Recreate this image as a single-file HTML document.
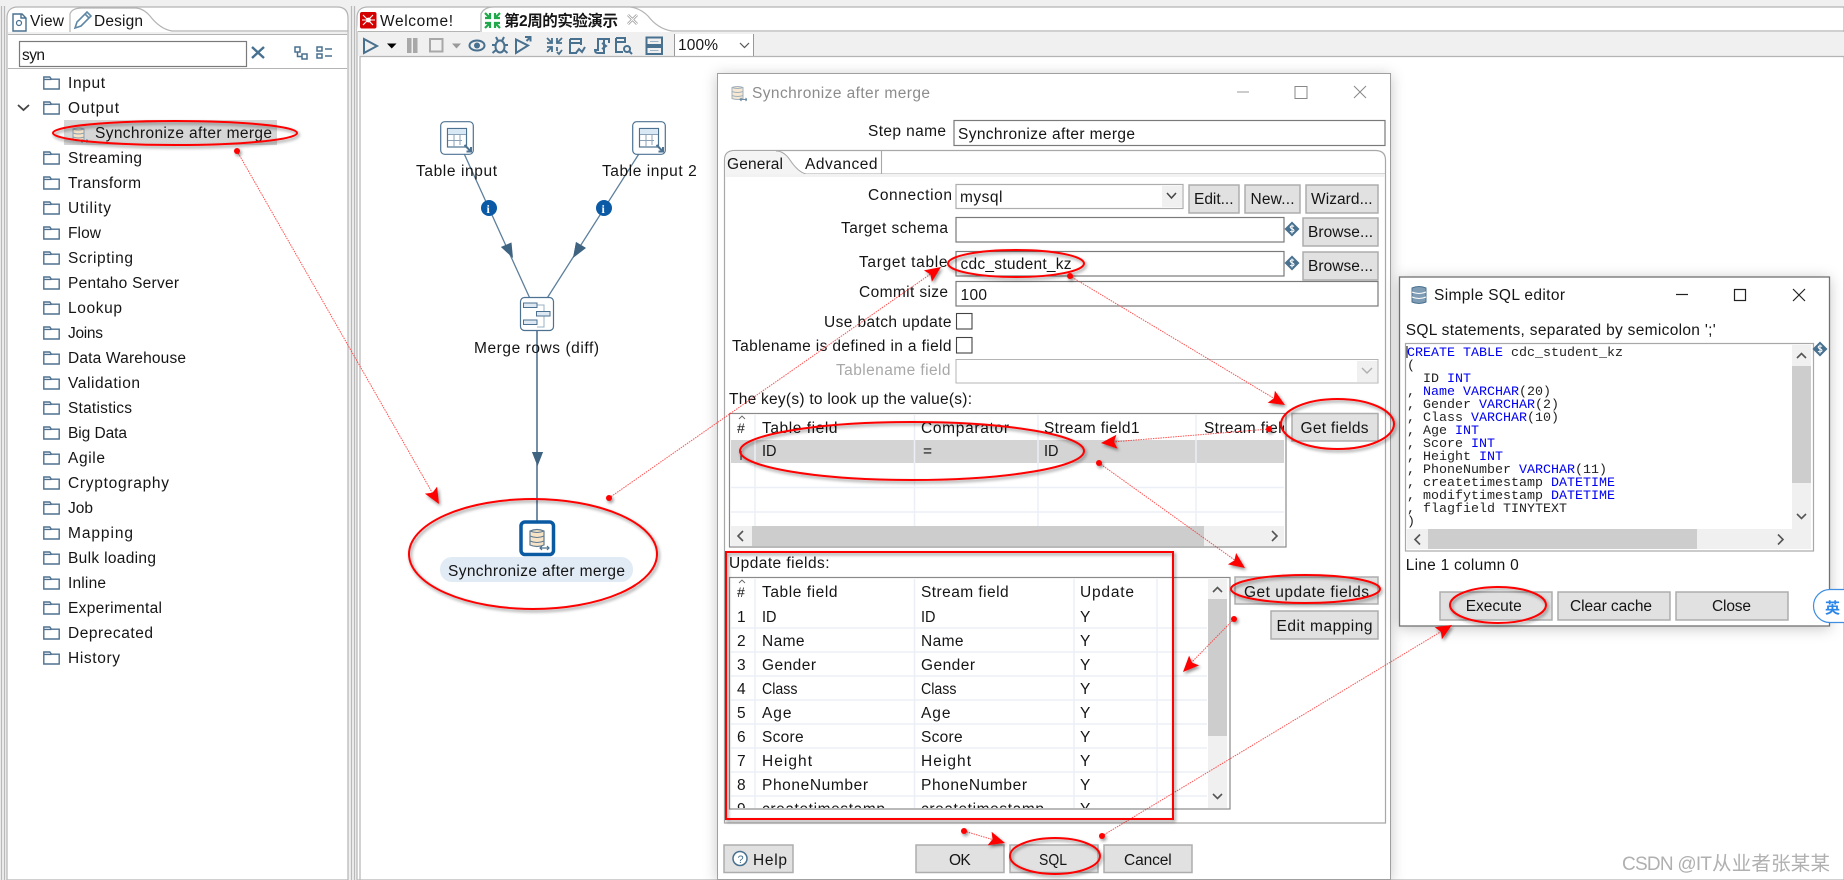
<!DOCTYPE html>
<html lang="en"><head><meta charset="utf-8"><title>Synchronize after merge</title>
<style>
html,body{margin:0;padding:0;background:#f0f0f0;width:1844px;height:880px;overflow:hidden}
svg{display:block}
text{font-family:"Liberation Sans","Noto Sans CJK SC",sans-serif;font-size:15.5px;fill:#151515}
.b{fill:#e1e1e1;stroke:#adadad;stroke-width:1.5}
.i{fill:#fff;stroke:#7a7a7a;stroke-width:1.2}
.ic{fill:none;stroke:#48708f;stroke-width:2}
.gl{stroke:#eceff5;stroke-width:1.5}
.sb{fill:#f0f0f0}.th{fill:#cdcdcd}
.ar{fill:none;stroke:#555;stroke-width:1.6}
.an{stroke:#f33;stroke-width:1;stroke-dasharray:1.5 1;fill:none;opacity:.85}
.e{fill:none;stroke:#f00;stroke-width:2}
.h{fill:#f00}
.m text,text.m{font-family:"Liberation Mono",monospace;font-size:13.33px;fill:#222}
.k{fill:#0000f0}
</style></head><body>
<svg xmlns="http://www.w3.org/2000/svg" width="1844" height="880" viewBox="0 0 1844 880">
<defs>
<filter id="s" x="-20%" y="-20%" width="150%" height="150%"><feDropShadow dx="1.5" dy="2" stdDeviation="1.6" flood-color="#000" flood-opacity=".45"/></filter>
<filter id="d" x="-5%" y="-5%" width="110%" height="110%"><feDropShadow dx="0" dy="2" stdDeviation="7" flood-color="#000" flood-opacity=".22"/></filter>
<clipPath id="c1"><rect x="731" y="414" width="553" height="112"/></clipPath>
<clipPath id="c2"><rect x="731" y="578" width="476" height="230"/></clipPath>
<symbol id="f" width="17" height="14" viewBox="0 0 17 14"><path d="M.8 1h6l1.6 2.200h7.800V13H.8zM.8 3.400h7.600" fill="none" stroke="#4f7190" stroke-width="1.400"/></symbol>
<symbol id="ds" width="16" height="16" viewBox="0 0 16 16"><path d="M8 .5 15.500 8 8 15.500.5 8z" fill="#48708f"/><path d="M10 5.500C9 4.600 6.200 4.600 6.200 6.300 6.200 8 10 7.500 10 9.500 10 11.200 7 11.200 6 10.200M8 3.500v9" stroke="#fff" stroke-width="1" fill="none"/></symbol>
<symbol id="t" width="34" height="34" viewBox="0 0 34 34"><rect x=".7" y=".7" width="32.600" height="32.600" rx="4" fill="#fff" stroke="#4d7291" stroke-width="1.200"/><rect x="7.500" y="7.500" width="19" height="18.500" fill="#fff" stroke="#4d7291" stroke-width="1.200"/><rect x="8" y="8" width="18" height="5" fill="#d9e8f5"/><path d="M8 13.500h18M8 19.500h14M14 13.500V26M20 13.500V24" stroke="#8aa3b8" fill="none"/><path d="M24.500 24l6.500 6.500M31 26v4.500h-4.500" stroke="#4d7291" stroke-width="2" fill="none"/></symbol>
<symbol id="db" width="16" height="16" viewBox="0 0 16 16"><path d="M1 2q5.500-2 11 0v11q-5.500 2-11 0z" fill="#f6e3c6" stroke="#8a9db0"/><path d="M1 2q5.500 2 11 0M1 6q5.500 2 11 0M1 10q5.500 2 11 0" fill="none" stroke="#8a9db0"/><path d="M9 14h7M10.500 12.500L9 14l1.500 1.500M14.500 12.500L16 14l-1.500 1.500" fill="none" stroke="#48708f" stroke-width="1.100"/></symbol>
</defs>

<rect width="1844" height="880" fill="#f0f0f0"/>
<!-- left window edges -->
<path d="M1.500 6V880M4.500 6V880" stroke="#b9b9b9" stroke-width="1.200"/>
<path d="M351.500 6V880M354.500 6V880" stroke="#b9b9b9" stroke-width="1.200"/>

<!-- Left panel -->
<path d="M7 880V18Q7 7 18 7H337Q348 7 348 18V880Z" fill="#fff" stroke="#b4b4b4" stroke-width="1.200"/>
<path d="M8 32H69V12Q69 9 66 9H18Q9 9 9 18V32Z" fill="#fff"/>
<path d="M70 32V14Q72 8 82 8H135Q143 8 150 16Q160 29 172 31H348" fill="#fff" stroke="#b4b4b4" stroke-width="1.200"/>
<rect x="8" y="32" width="339" height="3" fill="#f0f0f0"/>
<path d="M8 34.500H347" stroke="#b4b4b4"/>
<path d="M13 14h9l4 4v13H13zM21 14v4h5" fill="#fff" stroke="#48708f" stroke-width="1.400"/><circle cx="19" cy="23" r="2.500" fill="none" stroke="#48708f" stroke-width="1.200"/>
<path d="M75 28l2-6 10-10 4 4-10 10zM85 14l4 4" fill="none" stroke="#5f87a6" stroke-width="1.600"/>
<text x="30" y="26" textLength="34">View</text><text x="94" y="26" textLength="49">Design</text>
<rect x="19.500" y="41.500" width="227" height="25" class="i"/><text x="22" y="60" textLength="23">syn</text>
<path d="M252 47l12 11M264 47l-12 11" stroke="#48708f" stroke-width="2.400"/>
<path d="M295 47h5v5h-5zM302 54h5v5h-5zM297.500 52v4.500h4.500" fill="none" stroke="#48708f" stroke-width="1.500"/>
<path d="M317 47h5v4h-5zM317 54h5v4h-5zM325 49h7M325 56h7" fill="none" stroke="#48708f" stroke-width="1.500"/>
<path d="M8 68.500H347" stroke="#b4b4b4"/>
<path d="M18 105l5.500 5 5.500-5" fill="none" stroke="#444" stroke-width="1.800"/>
<use href="#f" x="43" y="76"/><text x="68" y="88" textLength="37">Input</text>
<use href="#f" x="43" y="101"/><text x="68" y="113" textLength="51">Output</text>
<rect x="64" y="120" width="213" height="25" fill="#d6d6d6"/>
<use href="#db" x="72" y="127"/>
<text x="95" y="138" textLength="177">Synchronize after merge</text>
<use href="#f" x="43" y="151"/><text x="68" y="163" textLength="74">Streaming</text>
<use href="#f" x="43" y="176"/><text x="68" y="188" textLength="73">Transform</text>
<use href="#f" x="43" y="201"/><text x="68" y="213" textLength="43">Utility</text>
<use href="#f" x="43" y="226"/><text x="68" y="238" textLength="33">Flow</text>
<use href="#f" x="43" y="251"/><text x="68" y="263" textLength="65">Scripting</text>
<use href="#f" x="43" y="276"/><text x="68" y="288" textLength="111">Pentaho Server</text>
<use href="#f" x="43" y="301"/><text x="68" y="313" textLength="54">Lookup</text>
<use href="#f" x="43" y="326"/><text x="68" y="338" textLength="35">Joins</text>
<use href="#f" x="43" y="351"/><text x="68" y="363" textLength="118">Data Warehouse</text>
<use href="#f" x="43" y="376"/><text x="68" y="388" textLength="72">Validation</text>
<use href="#f" x="43" y="401"/><text x="68" y="413" textLength="64">Statistics</text>
<use href="#f" x="43" y="426"/><text x="68" y="438" textLength="59">Big Data</text>
<use href="#f" x="43" y="451"/><text x="68" y="463" textLength="37">Agile</text>
<use href="#f" x="43" y="476"/><text x="68" y="488" textLength="101">Cryptography</text>
<use href="#f" x="43" y="501"/><text x="68" y="513" textLength="25">Job</text>
<use href="#f" x="43" y="526"/><text x="68" y="538" textLength="65">Mapping</text>
<use href="#f" x="43" y="551"/><text x="68" y="563" textLength="88">Bulk loading</text>
<use href="#f" x="43" y="576"/><text x="68" y="588" textLength="38">Inline</text>
<use href="#f" x="43" y="601"/><text x="68" y="613" textLength="94">Experimental</text>
<use href="#f" x="43" y="626"/><text x="68" y="638" textLength="85">Deprecated</text>
<use href="#f" x="43" y="651"/><text x="68" y="663" textLength="52">History</text>

<!-- Editor area -->
<path d="M357 880V18Q357 7 368 7H1844V880Z" fill="#fff" stroke="#b4b4b4" stroke-width="1.200"/>
<path d="M357 31H480V9H368Q358 9 358 18Z" fill="#fff"/>
<path d="M481 32V14Q484 7 494 7H630Q640 8 648 16Q658 29 672 31H1844" fill="#fff" stroke="#b4b4b4" stroke-width="1.200"/>
<rect x="358" y="32" width="1486" height="24" fill="#f0f0f0"/>
<path d="M480 31.500H358" stroke="#b4b4b4"/>
<rect x="360" y="12" width="16.500" height="16.500" rx="2" fill="#d40000"/>
<path d="M363 15l10 10M373 15l-10 10M362 20h13" stroke="#fff" stroke-width="1.100"/><circle cx="368.500" cy="20" r="2.400" fill="#fff"/>
<text x="380" y="26" textLength="73">Welcome!</text>
<path d="M485 13l5 5M490 13v5h-5M500 13l-5 5M495 13v5h5M485 28l5-5M490 28v-5h-5M500 28l-5-5M495 28v-5h5" fill="none" stroke="#1fa94a" stroke-width="2.200"/>
<text x="504" y="26" textLength="114" font-weight="bold" style="font-size:15.500px">第2周的实验演示</text>
<path d="M628 15l9 9M637 15l-9 9" stroke="#9a9a9a" stroke-width="2.600"/><path d="M628 15l9 9M637 15l-9 9" stroke="#fff" stroke-width="1"/>
<!-- toolbar -->
<path d="M364 39l13 7-13 7z" class="ic"/>
<path d="M387 43.500h9.500l-4.750 5z" fill="#000"/>
<path d="M407 38h4.500v15H407zM413 38h4.500v15H413z" fill="#a8a8a8"/>
<rect x="430" y="39" width="12.500" height="12.500" fill="none" stroke="#a8a8a8" stroke-width="2"/>
<path d="M452 43.500h9l-4.500 5z" fill="#999"/>
<ellipse cx="477" cy="45.500" rx="7.500" ry="5" class="ic"/><circle cx="477" cy="45.500" r="3" fill="#48708f"/>
<ellipse cx="500" cy="46.500" rx="4.500" ry="6" class="ic" stroke-width="2"/><path d="M496 37l2 4M504 37l-2 4M492 45h4M504 45h4M492.500 53l3.500-3M507.500 53l-3.500-3" class="ic" stroke-width="1.700"/>
<path d="M516 39.500l12 6-12 7.500zM525 37h5.500v4.500M530.500 37l-4 4" class="ic" stroke-width="1.900"/>
<path d="M547 38l5 5M552 38v5h-5M562 38l-5 5M557 38v5h5M547 52l5-5M552 52v-5h-5M557 47v4M557 52l2 2 3-4" fill="none" stroke="#48708f" stroke-width="1.800"/>
<path d="M570 39h11v6M570 39v14h7M570 43h11M576 53l3-4 3 3 3-5" class="ic" stroke-width="1.500"/>
<path d="M598 53q-3 0-3-3h3v-11h11v4M604 39v14h-6M602 43l4 3-4 3" class="ic" stroke-width="1.500"/>
<path d="M616 38h9v5M616 38v14h7M616 42h9" class="ic" stroke-width="1.500"/><circle cx="627" cy="49" r="3" class="ic" stroke-width="1.400"/><path d="M629 51l3 3" class="ic" stroke-width="1.500"/>
<rect x="646.500" y="37.500" width="15.500" height="7.500" class="ic" stroke-width="1.400"/><rect x="646.500" y="47" width="15.500" height="7" class="ic" stroke-width="1.400"/><path d="M650 41.500h8.500M650 50.500h8.500" stroke="#9db4c6"/>
<rect x="675" y="34" width="78" height="22" fill="#fff"/><path d="M674.500 34V56M753.500 34V56" stroke="#999"/>
<text x="678" y="50" textLength="40">100%</text><path d="M740 43l4.500 4.500 4.500-4.500" fill="none" stroke="#555" stroke-width="1.200"/>
<path d="M360 56.500H1844M360 56V880" stroke="#b4b4b4" stroke-width="1.200"/>

<!-- canvas -->
<path d="M457 138L537 314M649 138L537 314" stroke="#5d7f9c" stroke-width="1.300" fill="none"/>
<path d="M537 330V521" stroke="#46688a" stroke-width="1.500"/>
<use href="#t" x="440" y="121"/><use href="#t" x="632" y="121"/>
<text x="416" y="176" textLength="81">Table input</text><text x="602" y="176" textLength="94.700">Table input 2</text>
<circle cx="489" cy="208" r="8" fill="#0b5aa5"/><text x="486.500" y="213" style="font-size:12px;fill:#fff;font-weight:bold;font-family:'Liberation Serif',serif">i</text>
<circle cx="604" cy="208" r="8" fill="#0b5aa5"/><text x="601.500" y="213" style="font-size:12px;fill:#fff;font-weight:bold;font-family:'Liberation Serif',serif">i</text>
<path d="M513 258l-12-11 10.500-4.500-5 4zM573 258l3-16 10 6-6-2zM537.500 466l-5.500-14 5.500 2 5.500-2z" fill="#3f6482"/>
<path d="M513 258L501 247 511.500 242.500ZM573 258L576 242 586 248ZM537.500 466L532 452H543Z" fill="#3f6482"/>
<rect x="520.500" y="297.500" width="33" height="33" rx="4" fill="#fff" stroke="#4d7291" stroke-width="1.200"/>
<path d="M537 305h7v22h-7" fill="none" stroke="#9ab1c5"/>
<rect x="523.500" y="303" width="13.500" height="4.500" fill="#dfe9f3" stroke="#4d7291"/><rect x="536.500" y="311.500" width="13.500" height="4.500" fill="#dfe9f3" stroke="#4d7291"/><rect x="523.500" y="320" width="13.500" height="4.500" fill="#dfe9f3" stroke="#4d7291"/>
<text x="474" y="353" textLength="125">Merge rows (diff)</text>
<rect x="521" y="522" width="32.500" height="32.500" rx="4" fill="#fff" stroke="#0a5aa3" stroke-width="3.500"/>
<path d="M530 531q7-3 14 0v14q-7 3-14 0z" fill="#f6e3c6" stroke="#5f7a92" stroke-width="1.200"/><path d="M530 536q7 3 14 0M530 541q7 3 14 0M530 531q7 3 14 0" fill="none" stroke="#5f7a92"/>
<path d="M540 548h9M542 546l-2 2 2 2M547 546l2 2-2 2" fill="none" stroke="#48708f" stroke-width="1.200"/>
<rect x="440" y="557" width="193" height="25" rx="12" fill="#e1ebf5"/>
<text x="448" y="576" textLength="177">Synchronize after merge</text>

<!-- Dialog 1 -->
<rect x="717.500" y="73.500" width="673" height="806" fill="#fff" stroke="#a0a0a0" filter="url(#d)"/>
<use href="#db" x="731" y="85.500" opacity=".8"/>
<text x="752" y="98" textLength="178" style="fill:#8c8c8c">Synchronize after merge</text>
<path d="M1237 92h12" stroke="#aaa" stroke-width="1.200"/><rect x="1295" y="86.500" width="12" height="12" fill="none" stroke="#888"/><path d="M1354 86l12 12M1366 86l-12 12" stroke="#888"/>
<text x="868" y="136" textLength="78">Step name</text>
<rect x="954" y="120.500" width="431" height="25" class="i"/><text x="958" y="139" textLength="177">Synchronize after merge</text>
<path d="M724.500 823V160Q724.500 150.500 735 150.500H1375Q1385.500 150.500 1385.500 160V823Z" fill="#fff" stroke="#a8a8a8" stroke-width="1.200"/>
<path d="M725 174V160Q725 151 735 151H775Q784 151 790 160Q798 172 806 174Z" fill="#f4f4f4"/>
<path d="M776 151Q784 151 790 160Q798 172 806 174H1385M881.500 151V174" fill="none" stroke="#a8a8a8" stroke-width="1.100"/>
<rect x="725" y="174" width="660" height="3" fill="#f2f2f2"/>
<text x="727" y="169" textLength="56">General</text><text x="805" y="169" textLength="72.500">Advanced</text>
<text x="868" y="200" textLength="84">Connection</text>
<rect x="956" y="184.500" width="227" height="24" class="i" style="stroke:#adadad"/><rect x="1162" y="186" width="20" height="21" fill="#f0f0f0"/><path d="M1167 193l4.500 5 4.500-5" fill="none" stroke="#444" stroke-width="1.500"/>
<text x="960" y="202" textLength="42.500">mysql</text>
<rect x="1189" y="185" width="50" height="28" class="b"/><text x="1194" y="204" textLength="39.500">Edit...</text>
<rect x="1245" y="185" width="55" height="28" class="b"/><text x="1250.500" y="204" textLength="44">New...</text>
<rect x="1306" y="185" width="72" height="28" class="b"/><text x="1311" y="204" textLength="61.600">Wizard...</text>
<text x="841" y="233" textLength="107">Target schema</text>
<rect x="956" y="217.500" width="328" height="24.500" class="i"/><use href="#ds" x="1284" y="221"/>
<rect x="1303" y="218" width="75" height="28" class="b"/><text x="1308" y="237" textLength="65">Browse...</text>
<text x="859" y="267" textLength="88.500">Target table</text>
<rect x="956" y="251.500" width="328" height="24.500" class="i"/><use href="#ds" x="1284" y="255"/>
<text x="960.500" y="269" textLength="111">cdc_student_kz</text>
<rect x="1303" y="252" width="75" height="28" class="b"/><text x="1308" y="271" textLength="65">Browse...</text>
<text x="859" y="297" textLength="89">Commit size</text>
<rect x="956" y="281.500" width="422" height="24.500" class="i"/><text x="960.500" y="300" textLength="26.500">100</text>
<text x="824" y="327" textLength="127.500">Use batch update</text><rect x="956.500" y="313.500" width="15.500" height="15.500" fill="#fff" stroke="#444" stroke-width="1.100"/>
<text x="732" y="351" textLength="219.500">Tablename is defined in a field</text><rect x="956.500" y="337.500" width="15.500" height="15.500" fill="#fff" stroke="#444" stroke-width="1.100"/>
<text x="836" y="375" textLength="114.500" style="fill:#a8a8a8">Tablename field</text>
<rect x="956" y="359.500" width="422" height="23.500" fill="#fff" stroke="#b4b4b4"/><rect x="1357" y="361" width="20.500" height="21" fill="#f0f0f0"/><path d="M1362 368l5 5 5-5" fill="none" stroke="#b0b0b0" stroke-width="1.500"/>
<text x="729" y="404" textLength="243">The key(s) to look up the value(s):</text>

<!-- key table -->
<rect x="729.500" y="413.500" width="556.500" height="133.500" fill="#fff" stroke="#8a8a8a" stroke-width="1.200"/>
<rect x="731" y="440" width="553" height="23" fill="#d4d4d4"/>
<path d="M731 487.500H1284M731 512H1284" class="gl"/>
<path d="M755 415V526M914.500 415V526M1038 415V526M1196 415V526" class="gl"/>
<path d="M739 419l3-3 3 3" fill="none" stroke="#666" stroke-width=".9"/>
<g clip-path="url(#c1)"><text x="737" y="433" style="font-size:14px">#</text><text x="762" y="433" textLength="75.500">Table field</text><text x="921" y="433" textLength="88">Comparator</text><text x="1044" y="433" textLength="95.500">Stream field1</text><text x="1204" y="433" textLength="95.500">Stream field2</text>
<path d="M741 451v9" stroke="#333" stroke-width="1.200"/><text x="762" y="456" textLength="14.500" lengthAdjust="spacingAndGlyphs">ID</text><text x="923" y="456">=</text><text x="1044" y="456" textLength="14.500" lengthAdjust="spacingAndGlyphs">ID</text></g>
<rect x="731" y="526" width="553" height="20" class="sb"/><rect x="752" y="526" width="452" height="20" class="th"/>
<path d="M743 531l-5 5 5 5" class="ar"/><path d="M1272 531l5 5-5 5" class="ar"/>
<rect x="1292" y="413.500" width="86" height="27.500" class="b"/><text x="1300.500" y="433" textLength="68">Get fields</text>

<!-- update table -->
<text x="729" y="568" textLength="100.500">Update fields:</text>
<rect x="729.500" y="577.500" width="500.500" height="231.500" fill="#fff" stroke="#8a8a8a" stroke-width="1.200"/>
<path d="M731 628H1207M731 652H1207M731 676H1207M731 700H1207M731 724H1207M731 748H1207M731 772H1207M731 796H1207" class="gl"/>
<path d="M755 579V808M914.500 579V808M1074 579V808M1157 579V808" class="gl"/>
<path d="M739 583l3-3 3 3" fill="none" stroke="#666" stroke-width=".9"/>
<g clip-path="url(#c2)">
<text x="737" y="597" style="font-size:14px">#</text><text x="762" y="597" textLength="75.500">Table field</text><text x="921" y="597" textLength="87.600">Stream field</text><text x="1080" y="597" textLength="54">Update</text>
<text x="737" y="622">1</text><text x="762" y="622" textLength="14.500" lengthAdjust="spacingAndGlyphs">ID</text><text x="921" y="622" textLength="14.500" lengthAdjust="spacingAndGlyphs">ID</text><text x="1080" y="622">Y</text>
<text x="737" y="646">2</text><text x="762" y="646" textLength="42.500">Name</text><text x="921" y="646" textLength="42.500">Name</text><text x="1080" y="646">Y</text>
<text x="737" y="670">3</text><text x="762" y="670" textLength="54">Gender</text><text x="921" y="670" textLength="54">Gender</text><text x="1080" y="670">Y</text>
<text x="737" y="694">4</text><text x="762" y="694" textLength="35.500" lengthAdjust="spacingAndGlyphs">Class</text><text x="921" y="694" textLength="35.500" lengthAdjust="spacingAndGlyphs">Class</text><text x="1080" y="694">Y</text>
<text x="737" y="718">5</text><text x="762" y="718" textLength="29.500">Age</text><text x="921" y="718" textLength="29.500">Age</text><text x="1080" y="718">Y</text>
<text x="737" y="742">6</text><text x="762" y="742" textLength="41.600">Score</text><text x="921" y="742" textLength="41.600">Score</text><text x="1080" y="742">Y</text>
<text x="737" y="766">7</text><text x="762" y="766" textLength="50">Height</text><text x="921" y="766" textLength="50">Height</text><text x="1080" y="766">Y</text>
<text x="737" y="790">8</text><text x="762" y="790" textLength="106">PhoneNumber</text><text x="921" y="790" textLength="106">PhoneNumber</text><text x="1080" y="790">Y</text>
<text x="737" y="814">9</text><text x="762" y="814" textLength="123">createtimestamp</text><text x="921" y="814" textLength="123">createtimestamp</text><text x="1080" y="814">Y</text>
</g>
<rect x="1208" y="579" width="19" height="229" class="sb"/><rect x="1208" y="599" width="19" height="137" class="th"/>
<path d="M1213 592l4.500-4.500 4.500 4.500M1213 794l4.500 4.500 4.500-4.500" class="ar"/>
<rect x="1235" y="577" width="143" height="27" class="b"/><text x="1244" y="597" textLength="125">Get update fields</text>
<rect x="1271" y="611" width="107" height="28" class="b"/><text x="1276.500" y="631" textLength="96">Edit mapping</text>

<rect x="724" y="845" width="69" height="27.500" class="b"/><circle cx="740" cy="858.500" r="7" fill="#fff" stroke="#48708f" stroke-width="1.500"/><text x="737.500" y="863" style="font-size:11px;fill:#48708f">?</text><text x="753" y="865" textLength="34">Help</text>
<rect x="916" y="845" width="88" height="27.500" class="b"/><text x="949" y="865" textLength="21.700">OK</text>
<rect x="1010" y="845" width="88" height="27.500" class="b"/><text x="1039" y="865" textLength="28" lengthAdjust="spacingAndGlyphs">SQL</text>
<rect x="1104" y="845" width="88" height="27.500" class="b"/><text x="1124" y="865" textLength="47.700">Cancel</text>

<!-- SQL dialog -->
<rect x="1399.500" y="277" width="430" height="349" fill="#fff" stroke="#707070" stroke-width="1.300" filter="url(#d)"/>
<path d="M1412 288q7-3 14 0v14q-7 3-14 0z" fill="#7f9cb5" stroke="#48708f"/><path d="M1412 292q7 3 14 0M1412 297q7 3 14 0" fill="none" stroke="#fff"/>
<text x="1434" y="300" textLength="131">Simple SQL editor</text>
<path d="M1676 294.500h12" stroke="#222" stroke-width="1.200"/><rect x="1734.500" y="289.500" width="11" height="11" fill="none" stroke="#222" stroke-width="1.200"/><path d="M1793 289l12 12M1805 289l-12 12" stroke="#222" stroke-width="1.200"/>
<text x="1405.700" y="335" textLength="310">SQL statements, separated by semicolon ';'</text>
<rect x="1405.500" y="343.500" width="408" height="207.500" fill="#fff" stroke="#a8a8a8" stroke-width="1.200"/>
<path d="M1407 346v12" stroke="#000"/>
<g class="m">
<text x="1407" y="356"><tspan class="k">CREATE</tspan> <tspan class="k">TABLE</tspan> cdc_student_kz</text>
<text x="1407" y="369">(</text>
<text x="1423" y="382">ID <tspan class="k">INT</tspan></text>
<text x="1407" y="395">, <tspan class="k">Name</tspan> <tspan class="k">VARCHAR</tspan>(20)</text>
<text x="1407" y="408">, Gender <tspan class="k">VARCHAR</tspan>(2)</text>
<text x="1407" y="421">, Class <tspan class="k">VARCHAR</tspan>(10)</text>
<text x="1407" y="434">, Age <tspan class="k">INT</tspan></text>
<text x="1407" y="447">, Score <tspan class="k">INT</tspan></text>
<text x="1407" y="460">, Height <tspan class="k">INT</tspan></text>
<text x="1407" y="473">, PhoneNumber <tspan class="k">VARCHAR</tspan>(11)</text>
<text x="1407" y="486">, createtimestamp <tspan class="k">DATETIME</tspan></text>
<text x="1407" y="499">, modifytimestamp <tspan class="k">DATETIME</tspan></text>
<text x="1407" y="512">, flagfield TINYTEXT</text>
<text x="1407" y="525">)</text>
</g>
<rect x="1792" y="345" width="19" height="184" class="sb"/><rect x="1792" y="366" width="19" height="117" class="th"/>
<path d="M1797 358l4.500-4.500 4.500 4.500M1797 514l4.500 4.500 4.500-4.500" class="ar"/>
<rect x="1407" y="529" width="404" height="20" class="sb"/><rect x="1428" y="529" width="269" height="20" class="th"/>
<path d="M1420 534.500l-5 5 5 5M1778 534.500l5 5-5 5" class="ar"/>
<use href="#ds" x="1812" y="341"/>
<text x="1405.700" y="570" textLength="113">Line 1 column 0</text>
<rect x="1440" y="592" width="112" height="28" class="b"/><text x="1465.700" y="611" textLength="56">Execute</text>
<rect x="1558" y="592" width="112" height="28" class="b"/><text x="1570" y="611" textLength="82">Clear cache</text>
<rect x="1676" y="592" width="112" height="28" class="b"/><text x="1712" y="611" textLength="39">Close</text>
<rect x="1813.500" y="589.500" width="50" height="33" rx="16.500" fill="#fff" stroke="#3f8ee0" stroke-width="1.200"/>
<text x="1825" y="613" style="font-size:15px;font-weight:bold;fill:#2a86e8">英</text>

<!-- watermark -->
<text x="1622" y="870" textLength="90" style="font-size:19px;fill:#b0b0b0">CSDN @IT</text>
<text x="1712" y="870" textLength="118" style="font-size:19.500px;fill:#b0b0b0">从业者张某某</text>

<!-- annotations -->
<path class="an" d="M237 151L433 494M609 498L932 273M1070 276L1275 399M1269 429L1112 442M1099 463L1236 561M1234 619L1190 664M964 831L994 840M1102 836L1442 631"/>
<g filter="url(#s)">
<ellipse class="e" cx="175" cy="133" rx="122" ry="12"/>
<ellipse class="e" cx="533" cy="554" rx="124" ry="55"/>
<ellipse class="e" cx="1016" cy="263.500" rx="68" ry="13.500"/>
<ellipse class="e" cx="1337.500" cy="424" rx="56.500" ry="25"/>
<ellipse class="e" cx="912" cy="451" rx="172" ry="29"/>
<ellipse class="e" cx="1305.500" cy="589" rx="74.500" ry="14"/>
<ellipse class="e" cx="1055" cy="856" rx="45" ry="18"/>
<ellipse class="e" cx="1498" cy="605" rx="48" ry="18"/>
<rect class="e" x="726" y="552" width="447" height="267"/>
<path class="h" d="M439 504L437.100 486.600 432.500 492.700 424.900 493.600Z"/>
<path class="h" d="M941 267L931.900 281.800 930.300 274.400 923.900 270.400Z"/>
<path class="h" d="M1285 405L1274.900 390.800 1273.900 398.300 1267.700 402.800Z"/>
<path class="h" d="M1101 443L1117.600 448.700 1114 441.900 1116.400 434.700Z"/>
<path class="h" d="M1245 568L1236.100 553 1234.400 560.400 1227.900 564.400Z"/>
<path class="h" d="M1183 672L1199.100 665.400 1192 662.600 1189.100 655.600Z"/>
<path class="h" d="M1005 843L991.600 831.800 992.500 839.300 987.600 845.200Z"/>
<path class="h" d="M1452 625L1441.900 639.300 1440.900 631.700 1434.700 627.300Z"/>
<circle class="h" cx="237" cy="151" r="3"/><circle class="h" cx="609" cy="498" r="3"/><circle class="h" cx="1070" cy="276" r="3"/><circle class="h" cx="1269" cy="429" r="3"/><circle class="h" cx="1099" cy="463" r="3"/><circle class="h" cx="1234" cy="619" r="3"/><circle class="h" cx="964" cy="831" r="3"/><circle class="h" cx="1102" cy="836" r="3"/>
</g>
</svg>
</body></html>
